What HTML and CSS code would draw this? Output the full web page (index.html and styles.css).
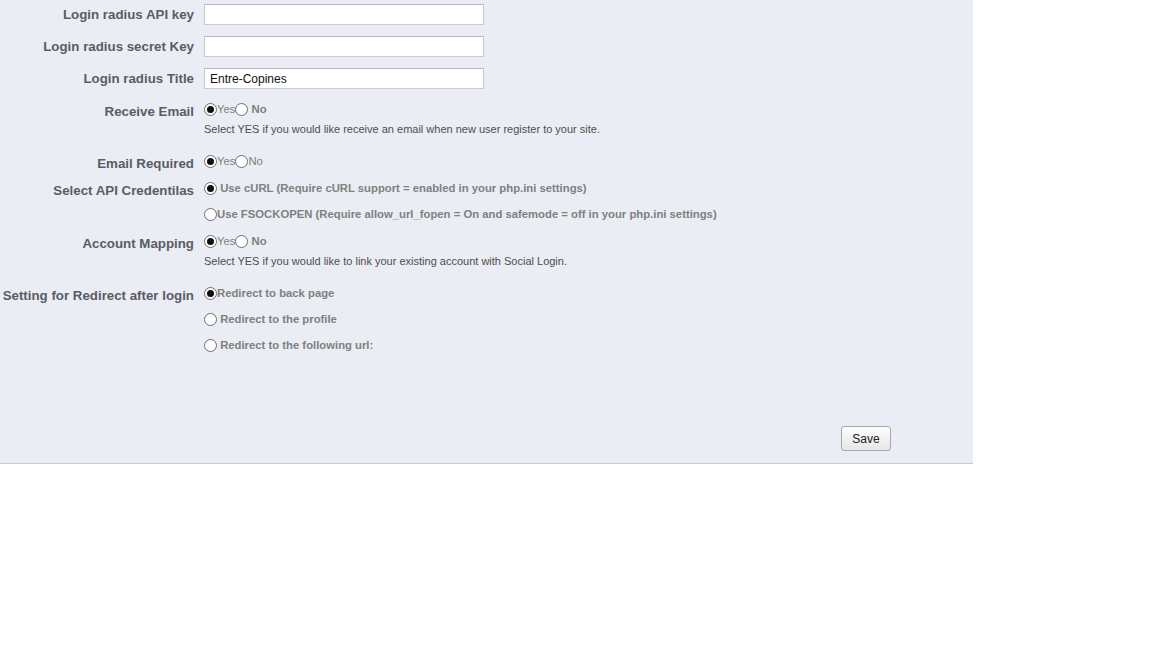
FILE: index.html
```html
<!DOCTYPE html>
<html lang="en">
<head>
    <meta charset="UTF-8">
    <title>Social Login Settings</title>
    <link rel="stylesheet" href="styles.css">
</head>
<body>
    <div class="panel">
        <div class="field field-text first">
            <label class="field-label" for="apiKey">Login radius API key</label>
            <input type="text" id="apiKey" class="text-input">
        </div>
        <div class="field field-text">
            <label class="field-label" for="secretKey">Login radius secret Key</label>
            <input type="text" id="secretKey" class="text-input">
        </div>
        <div class="field field-text">
            <label class="field-label" for="title">Login radius Title</label>
            <input type="text" id="title" class="text-input" value="Entre-Copines">
        </div>

        <div class="field receive-email">
            <span class="field-label">Receive Email</span>
            <div class="options">
                <div class="option-line"><input type="radio" name="receiveEmail" checked><span class="light">Yes</span><input type="radio" name="receiveEmail"> No</div>
                <p class="hint">Select YES if you would like receive an email when new user register to your site.</p>
            </div>
        </div>

        <div class="field email-required">
            <span class="field-label">Email Required</span>
            <div class="options">
                <div class="option-line"><input type="radio" name="emailRequired" checked><span class="light">Yes</span><input type="radio" name="emailRequired"><span class="light">No</span></div>
            </div>
        </div>

        <div class="field api-cred">
            <span class="field-label">Select API Credentilas</span>
            <div class="options">
                <div class="option-line"><input type="radio" name="apiCred" checked> Use cURL (Require cURL support = enabled in your php.ini settings)</div>
                <div class="option-line spaced"><input type="radio" name="apiCred">Use FSOCKOPEN (Require allow_url_fopen = On and safemode = off in your php.ini settings)</div>
            </div>
        </div>

        <div class="field account-mapping">
            <span class="field-label">Account Mapping</span>
            <div class="options">
                <div class="option-line"><input type="radio" name="mapping" checked><span class="light">Yes</span><input type="radio" name="mapping"> No</div>
                <p class="hint">Select YES if you would like to link your existing account with Social Login.</p>
            </div>
        </div>

        <div class="field redirect">
            <span class="field-label">Setting for Redirect after login</span>
            <div class="options">
                <div class="option-line"><input type="radio" name="redirect" checked>Redirect to back page</div>
                <div class="option-line spaced"><input type="radio" name="redirect"> Redirect to the profile</div>
                <div class="option-line spaced"><input type="radio" name="redirect"> Redirect to the following url:</div>
            </div>
        </div>

        <div class="actions">
            <button class="save-btn">Save</button>
        </div>
    </div>
</body>
</html>
```

FILE: styles.css
```css
* {
    margin: 0;
    padding: 0;
    box-sizing: border-box;
}

body {
    background: #ffffff;
    font-family: "Liberation Sans", Arial, sans-serif;
}

.panel {
    width: 973px;
    height: 464px;
    background-color: #eaedf4;
    border-bottom: 1px solid #c9cacd;
    display: flex;
    flex-direction: column;
}

.field {
    display: grid;
    grid-template-columns: 194px 1fr;
    column-gap: 10px;
    align-items: start;
}

.field-label {
    text-align: right;
    font-size: 13.3px;
    font-weight: bold;
    color: #5a5c66;
    white-space: nowrap;
    line-height: 18px;
    padding-top: 3px;
}

/* text inputs */
.field-text {
    margin-top: 11px;
}

.field-text.first {
    margin-top: 4px;
}

.field-text .field-label {
    line-height: 21px;
    padding-top: 0;
}

.text-input {
    width: 280px;
    height: 21px;
    border: 1px solid #c9cbd0;
    border-top-color: #b4b6bb;
    background: #ffffff;
    font-family: "Liberation Sans", Arial, sans-serif;
    font-size: 12px;
    color: #111;
    padding: 0 5px;
    outline: none;
}

/* radio groups */
.option-line {
    height: 18px;
    line-height: 18px;
    font-size: 11.3px;
    font-weight: bold;
    color: #808080;
    white-space: nowrap;
}

.option-line.spaced {
    margin-top: 8px;
}

.option-line .light {
    font-weight: normal;
}

.option-line input[type="radio"] {
    appearance: none;
    -webkit-appearance: none;
    width: 13px;
    height: 13px;
    border: 1px solid #6f6f6f;
    border-radius: 50%;
    background: #ffffff;
    margin: 0;
    display: inline-block;
    position: relative;
    vertical-align: -3px;
}

.option-line input[type="radio"]:checked::after {
    content: "";
    position: absolute;
    left: 2px;
    top: 2px;
    width: 7px;
    height: 7px;
    border-radius: 50%;
    background: #111;
}

.hint {
    margin-top: 4px;
    font-size: 11px;
    line-height: 14px;
    color: #4e4e4e;
}

.receive-email {
    margin-top: 11px;
}

.email-required {
    margin-top: 16px;
}

.api-cred {
    margin-top: 6px;
}

.account-mapping {
    margin-top: 9px;
}

.redirect {
    margin-top: 16px;
}

/* footer */
.actions {
    display: flex;
    justify-content: flex-end;
    padding-right: 82px;
    margin-top: 72px;
}

.save-btn {
    width: 50px;
    height: 25px;
    border: 1px solid #a9a9a9;
    border-radius: 3px;
    background: linear-gradient(#fdfdfd, #e6e6e6);
    font-family: "Liberation Sans", Arial, sans-serif;
    font-size: 12px;
    color: #222;
    cursor: pointer;
}
```
